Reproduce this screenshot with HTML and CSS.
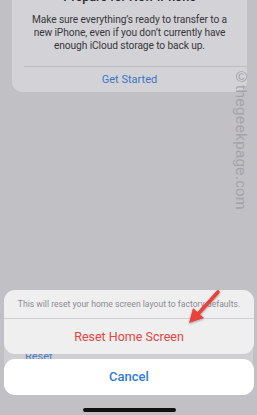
FILE: index.html
```html
<!DOCTYPE html>
<html>
<head>
<meta charset="utf-8">
<link rel="stylesheet" href="styles.css">
</head>
<body>
<div class="screen">
  <div class="card">
    <div class="card-title">Prepare for New iPhone</div>
    <p class="card-text">Make sure everything’s ready to transfer to a<br>new iPhone, even if you don’t currently have<br>enough iCloud storage to back up.</p>
    <div class="card-sep"></div>
    <div class="card-action">Get Started</div>
  </div>
  <div class="spacer"></div>
  <div class="reset-card"><span class="reset-link">Reset</span></div>

  <div class="watermark">©thegeekpage.com</div>

  <div class="sheet">
    <div class="sheet-group">
      <div class="sheet-desc">This will reset your home screen layout to factory defaults.</div>
      <div class="sheet-sep"></div>
      <div class="sheet-destructive">Reset Home Screen</div>
    </div>
    <div class="sheet-cancel">Cancel</div>
  </div>

  <svg class="arrow" width="50" height="50" viewBox="0 0 50 50">
    <defs>
      <filter id="sh" x="-30%" y="-30%" width="160%" height="160%">
        <feDropShadow dx="0" dy="1" stdDeviation="1" flood-color="#000" flood-opacity="0.35"/>
      </filter>
    </defs>
    <g filter="url(#sh)">
      <line x1="38" y1="7" x2="18" y2="29" stroke="#e8423c" stroke-width="3.6" stroke-linecap="round"/>
      <polygon points="9,38 13,23 24,33" fill="#e8423c"/>
    </g>
  </svg>

  <div class="home-indicator"></div>
</div>
</body>
</html>
```

FILE: styles.css
```css
* { box-sizing: border-box; }
html, body { margin: 0; padding: 0; }
body {
  width: 257px;
  height: 415px;
  overflow: hidden;
  background: #c1c0c5;
  font-family: Roboto, "Liberation Sans", sans-serif;
}
.screen {
  position: relative;
  width: 257px;
  height: 415px;
  display: flex;
  flex-direction: column;
  overflow: hidden;
}
.card {
  margin: -16px 10px 0 12px;
  padding-top: 5px;
  background: #d3d2d7;
  border-radius: 0 0 10px 10px;
  text-align: center;
}
.card-title {
  font-size: 12.5px;
  font-weight: 500;
  line-height: 16px;
  color: #2a2a2c;
}
.card-text {
  margin: 8px 0 0;
  padding: 0;
  font-size: 10.2px;
  letter-spacing: -0.1px;
  line-height: 13px;
  color: #38383a;
  white-space: nowrap;
}
.card-sep {
  margin: 14px 0 0 12px;
  height: 1px;
  background: #bdbcc1;
}
.card-action {
  height: 25px;
  line-height: 25px;
  font-size: 11px;
  color: #3a79c6;
}
.spacer { flex: 1; }
.reset-card {
  margin: 0 4px 46px 4px;
  height: 32px;
  background: #cfced3;
  border-radius: 8px;
  padding: 8px 0 0 21px;
}
.reset-link {
  font-size: 11px;
  line-height: 14px;
  color: #4c7fc0;
}
.watermark {
  position: absolute;
  left: 233px;
  top: 68px;
  writing-mode: vertical-rl;
  font-family: "Liberation Sans", sans-serif;
  font-size: 15.5px;
  line-height: 17px;
  color: #a4a3a9;
  letter-spacing: 0.1px;
}
.sheet {
  position: absolute;
  left: 4px;
  right: 3px;
  bottom: 20px;
  display: flex;
  flex-direction: column;
  gap: 5px;
}
.sheet-group {
  background: #efeff0;
  border-radius: 11px;
  overflow: hidden;
  text-align: center;
}
.sheet-desc {
  height: 28px;
  line-height: 28px;
  font-size: 8.6px;
  color: #8c8c91;
  white-space: nowrap;
}
.sheet-sep {
  height: 1px;
  background: #cfcfd3;
}
.sheet-destructive {
  height: 35px;
  line-height: 35px;
  font-size: 12.5px;
  color: #e6443f;
}
.sheet-cancel {
  height: 36px;
  line-height: 36px;
  background: #ffffff;
  border-radius: 11px;
  text-align: center;
  font-size: 13px;
  font-weight: 500;
  color: #2f7bdc;
}
.arrow {
  position: absolute;
  left: 180px;
  top: 285px;
}
.home-indicator {
  position: absolute;
  left: 83px;
  top: 408px;
  width: 93px;
  height: 4px;
  border-radius: 2px;
  background: #111111;
}
```
